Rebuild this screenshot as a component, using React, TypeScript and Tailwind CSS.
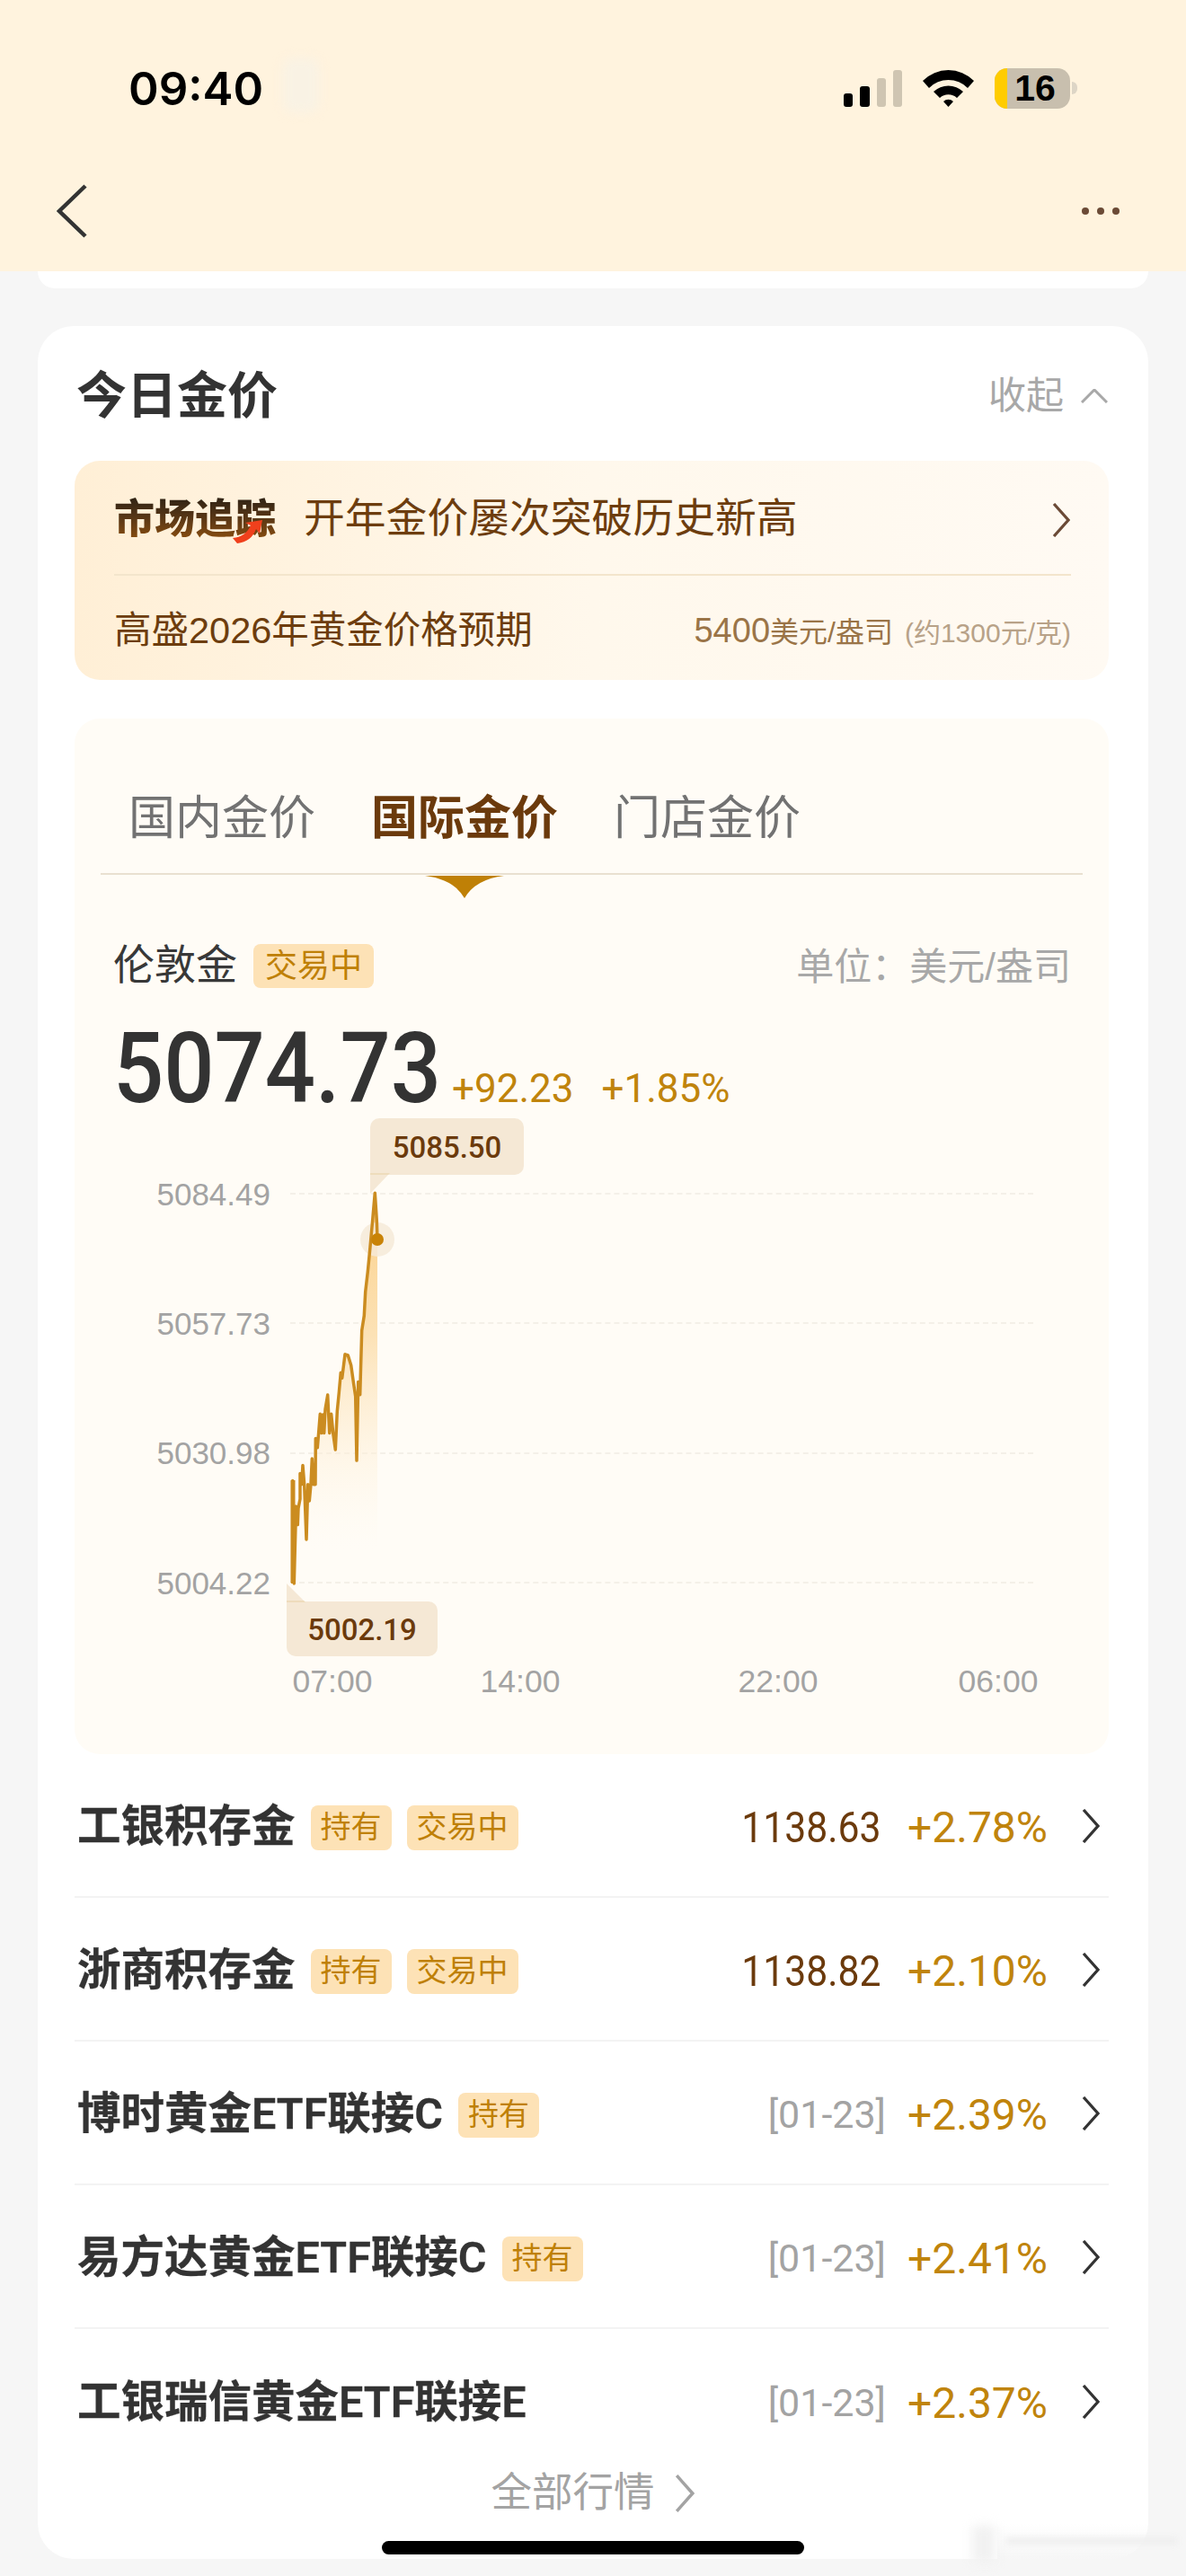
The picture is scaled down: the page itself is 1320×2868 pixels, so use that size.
const AXIS = ["5084.49", "5057.73", "5030.98", "5004.22"];

const FUNDS = [
  { name: "工银积存金", tags: ["持有", "交易中"], value: "1138.63", pct: "+2.78%" },
  { name: "浙商积存金", tags: ["持有", "交易中"], value: "1138.82", pct: "+2.10%" },
  { name: "博时黄金ETF联接C", tags: ["持有"], date: "[01-23]", pct: "+2.39%" },
  { name: "易方达黄金ETF联接C", tags: ["持有"], date: "[01-23]", pct: "+2.41%" },
  { name: "工银瑞信黄金ETF联接E", tags: [], date: "[01-23]", pct: "+2.37%" },
];

// traced from the chart, x then y, in page pixels once mapped below
const TRACE = [
  [587, 1330], [587, 1050], [592, 1330], [597, 1170], [598, 1120], [604, 1170], [606, 1125], [612, 1100],
  [612, 1030], [617, 1060], [621, 1008], [626, 1060], [633, 1210], [638, 1060], [643, 1105], [648, 1060],
  [652, 990], [657, 1060], [663, 1060], [664, 935], [670, 960], [679, 868], [683, 920], [688, 870],
  [692, 920], [696, 855], [704, 816], [710, 920], [716, 868], [722, 920], [730, 965], [736, 860],
  [742, 810], [748, 755], [752, 770], [762, 705], [772, 708], [782, 735], [790, 780], [797, 820],
  [801, 995], [806, 780], [812, 815], [818, 640], [826, 600], [830, 535], [838, 480], [845, 420],
  [853, 350], [862, 265], [868, 340], [870, 392],
];
const LINE = TRACE.map(([x, y]) => `${(130 + x / 3).toFixed(1)},${(1220 + y / 2.45).toFixed(1)}`).join(" ");

function Chevron({ className }: { className: string }) {
  return (
    <svg viewBox="0 0 20 38" fill="none" stroke="currentColor" strokeWidth="3.2" className={className}>
      <path d="M2 1 L18 19 L2 37" />
    </svg>
  );
}

function Tag({ label }: { label: string }) {
  return (
    <span className="flex h-[50px] items-center rounded-[8px] bg-[#fde2b6] px-[11px] text-[34px] text-[#bf8006]">
      {label}
    </span>
  );
}

function StatusBar() {
  return (
    <div className="flex h-[56px] items-center justify-between pl-[143px] pr-[121px]">
      <div className="relative font-['Inter',sans-serif] text-[51px] font-semibold leading-none text-black">
        09:40
        <span className="absolute left-[172px] top-[-8px] h-[60px] w-[40px] rounded-[10px] bg-[#f9f2e4] blur-[6px]" />
      </div>
      <div className="flex items-center gap-[23px]">
        <svg width="65" height="41" viewBox="0 0 65 41">
          <rect x="0" y="26" width="10" height="15" rx="3" fill="#000" />
          <rect x="18" y="18" width="11" height="23" rx="3" fill="#000" />
          <rect x="37" y="9" width="10" height="32" rx="3" fill="#cfc5b2" />
          <rect x="55" y="0" width="10" height="41" rx="3" fill="#cfc5b2" />
        </svg>
        <svg width="57" height="42" viewBox="0 0 57 42" fill="#000">
          <path d="M0 13 A40 40 0 0 1 57 13 L50 21 A30 30 0 0 0 7 21 Z" />
          <path d="M12 25 A24 24 0 0 1 45 25 L38 32 A14 14 0 0 0 19 32 Z" />
          <path d="M23 36 A8 8 0 0 1 34 36 L28.500 42 Z" />
        </svg>
        <div className="flex items-center gap-[2px]">
          <div className="relative flex h-[45px] w-[84px] items-center justify-center overflow-hidden rounded-[14px] bg-[#c8bfae]">
            <span className="absolute inset-y-0 left-0 w-[14px] bg-[#ffcc00]" />
            <span className="pl-[6px] text-[41px] font-bold leading-none text-black">16</span>
          </div>
          <span className="h-[14px] w-[6px] rounded-r-full bg-[#ddd5c6]" />
        </div>
      </div>
    </div>
  );
}

function Banner() {
  return (
    <div className="h-[244px] rounded-[28px] bg-linear-to-r from-[#ffefd6] via-[#fff8ec] to-[#fffaf3] pl-[44px] pr-[42px]">
      <div className="flex h-[128px] items-center border-b-2 border-[#f3e5cc] pt-[5px]">
        <div className="relative">
          <span className="bg-linear-to-b from-[#2e2214] to-[#8f500a] bg-clip-text text-[45px] font-black leading-none text-transparent">
            市场追踪
          </span>
          <svg width="36" height="28" viewBox="0 0 36 28" className="absolute left-[131px] top-[22px]">
            <path d="M1 21 Q15 20 21 7 L15 4 L34 1 L31 16 L27 11 Q22 25 6 27 Z" fill="#f0401c" />
          </svg>
        </div>
        <span className="ml-[31px] text-[45.800px] text-[#6d3d0e]">开年金价屡次突破历史新高</span>
        <Chevron className="ml-auto mr-[1px] h-[38px] w-[20px] text-[#6b4a36]" />
      </div>
      <div className="flex h-[114px] items-center justify-between pt-[9px]">
        <span className="text-[41.500px] text-[#6d3d0e]">高盛2026年黄金价格预期</span>
        <div className="flex items-baseline">
          <span className="text-[38px] text-[#9a7447]">5400</span>
          <span className="text-[32px] text-[#9a7447]">美元/盎司</span>
          <span className="ml-[13px] text-[30px] text-[#b8a288]">(约1300元/克)</span>
        </div>
      </div>
    </div>
  );
}

function PriceChart() {
  return (
    <div className="relative mt-[12px]">
      <div className="flex flex-col pr-[84px]">
        {AXIS.map((label) => (
          <div key={label} className="flex h-[144.330px] items-center">
            <span className="w-[218px] text-right text-[35px] leading-none text-[#a3a3a3]">{label}</span>
            <span className="ml-[22px] flex-1 border-t-2 border-dashed border-[#f4f0e8]" />
          </div>
        ))}
      </div>
      <div className="mt-[16px] flex pl-[237px] text-[35.500px] leading-[44px] text-[#a3a3a3]">
        <span className="w-[100px] text-center">07:00</span>
        <span className="ml-[109px] w-[100px] text-center">14:00</span>
        <span className="ml-[187px] w-[100px] text-center">22:00</span>
        <span className="ml-[145px] w-[100px] text-center">06:00</span>
      </div>

      <div className="absolute left-[329px] top-[-12px] flex h-[63px] w-[171px] items-center justify-center rounded-[10px] rounded-bl-none bg-[#f5e8d5] pt-[3px] font-['Roboto',sans-serif] text-[33px] font-medium text-[#6b3a0c]">
        5085.50
      </div>
      <div className="absolute left-[236px] top-[526px] flex h-[61px] w-[168px] items-center justify-center rounded-[10px] rounded-tl-none bg-[#f5e8d5] pt-[3px] font-['Roboto',sans-serif] text-[33px] font-medium text-[#6b3a0c]">
        5002.19
      </div>

      <svg className="absolute left-0 top-0 overflow-visible" width="1151" height="577" viewBox="83 1257 1151 577">
        <defs>
          <linearGradient id="area" gradientUnits="userSpaceOnUse" x1="0" y1="1330" x2="0" y2="1725">
            <stop offset="0" stopColor="#fbd08a" />
            <stop offset="0.4" stopColor="#fce2b6" />
            <stop offset="1" stopColor="#fff8ec" stopOpacity="0" />
          </linearGradient>
        </defs>
        <polygon points={`${LINE} 420,1730 326,1730`} fill="url(#area)" />
        <path d="M412 1308 H432 L412 1329 Z" fill="#f5e8d5" />
        <path d="M412 1306 H434 L432 1308 H412 Z" fill="#eedcbc" />
        <path d="M319 1783 H339 L319 1763 Z" fill="#f5e8d5" />
        <path d="M319 1782 H338 L340 1784 H319 Z" fill="#eedcbc" />
        <circle cx="420" cy="1380" r="19" fill="#f6ead8" fillOpacity="0.85" />
        <polyline points={LINE} fill="none" stroke="#cb8c20" strokeWidth="3.500" strokeLinejoin="round" />
        <path d="M326 1648 V1762" stroke="#cb8c20" strokeWidth="5" />
        <circle cx="420" cy="1380" r="7" fill="#c98307" />
      </svg>
    </div>
  );
}

function QuotePanel() {
  return (
    <div className="relative mt-[43px] h-[1153px] rounded-[28px] bg-[#fffcf6]">
      <div className="mx-[29px] flex h-[174px] items-end gap-[62px] border-b-2 border-[#e9e0d0] pb-[29px] pl-[31px] text-[52px] leading-[64px] text-[#727272]">
        <span>国内金价</span>
        <span className="font-bold text-[#6b3a0c]">国际金价</span>
        <span>门店金价</span>
      </div>
      <svg width="88" height="25" viewBox="0 0 88 25" className="absolute left-[390px] top-[175px]">
        <path d="M0 0 H88 Q56 4 44 25 Q32 4 0 0 Z" fill="#bf8006" />
      </svg>

      <div className="mt-[74px] flex h-[52px] items-center pl-[43px] pr-[42px]">
        <span className="text-[46px] leading-none text-[#383838]">伦敦金</span>
        <span className="ml-[18px] mt-[3px] flex h-[49px] items-center rounded-[8px] bg-[#fde2b6] px-[13px] text-[36px] text-[#bf8006]">
          交易中
        </span>
        <span className="ml-auto pt-[6px] text-[42px] leading-none text-[#a8a8a8]">单位：美元/盎司</span>
      </div>

      <div className="mt-[35px] flex h-[110px] items-baseline pl-[43px]">
        <span className="w-[377px]">
          <span className="inline-block origin-left scale-x-[0.9] font-['Roboto',sans-serif] text-[110px] font-medium leading-none text-[#333]">
            5074.73
          </span>
        </span>
        <span className="font-['Roboto',sans-serif] text-[44px] leading-none text-[#c0840c]">+92.23</span>
        <span className="ml-[31px] font-['Roboto',sans-serif] text-[44px] leading-none text-[#c0840c]">+1.85%</span>
      </div>

      <PriceChart />
    </div>
  );
}

function FundRow({ fund, last }: { fund: (typeof FUNDS)[number]; last: boolean }) {
  return (
    <div className={`flex h-[160px] items-center pl-[3px] pr-[10px] pt-[5px] ${last ? "" : "border-b-2 border-[#f3f3f3]"}`}>
      <span className="mr-[17px] font-['Roboto','Noto_Sans_CJK_SC',sans-serif] text-[48.500px] font-semibold leading-none text-[#333] [-webkit-text-stroke:0.3px_#333]">
        {fund.name}
      </span>
      <div className="flex gap-[17px]">
        {fund.tags.map((t) => (
          <Tag key={t} label={t} />
        ))}
      </div>
      {fund.value ? (
        <span className="ml-auto mr-[30px] inline-block origin-right scale-x-[0.89] font-['Roboto',sans-serif] text-[48px] text-[#6b3a0c]">
          {fund.value}
        </span>
      ) : (
        <span className="ml-auto mr-[24px] font-['Roboto',sans-serif] text-[43px] text-[#a3a3a3]">{fund.date}</span>
      )}
      <span className="font-['Roboto',sans-serif] text-[48px] text-[#c0840c]">{fund.pct}</span>
      <Chevron className="ml-[38px] h-[38px] w-[20px] -translate-y-[2px] text-[#333]" />
    </div>
  );
}

export default function App() {
  return (
    <div className="relative h-[2868px] w-[1320px] overflow-hidden bg-[#f6f6f6] font-['Liberation_Sans','Noto_Sans_CJK_SC',sans-serif]">
      <header className="h-[302px] bg-[#fff3de] pt-[70px]">
        <StatusBar />
        <div className="mt-[74px] flex h-[70px] items-center justify-between pl-[63px] pr-[74px]">
          <svg width="34" height="60" viewBox="0 0 34 60" fill="none" stroke="#333" strokeWidth="4.500">
            <path d="M32 2 L3 30 L32 58" />
          </svg>
          <div className="flex gap-[9px]">
            <span className="h-[8px] w-[8px] rounded-full bg-[#6b4a36]" />
            <span className="h-[8px] w-[8px] rounded-full bg-[#6b4a36]" />
            <span className="h-[8px] w-[8px] rounded-full bg-[#6b4a36]" />
          </div>
        </div>
      </header>

      <main className="px-[42px]">
        <div className="h-[19px] rounded-b-[28px] bg-white" />

        <section className="mt-[42px] rounded-[40px] bg-white px-[41px] pb-[50px] pr-[44px]">
          <div className="flex h-[150px] items-center justify-between pt-[6px]">
            <h2 className="pl-[2px] text-[56px] font-semibold leading-none text-[#333]">今日金价</h2>
            <div className="flex items-center gap-[19px] pr-[1px]">
              <span className="text-[42px] leading-none text-[#a8a8a8]">收起</span>
              <svg width="30" height="16" viewBox="0 0 30 16" fill="none" stroke="#a8a8a8" strokeWidth="3">
                <path d="M1 15 L15 1 L29 15" />
              </svg>
            </div>
          </div>

          <Banner />
          <QuotePanel />

          {FUNDS.map((fund, i) => (
            <FundRow key={fund.name} fund={fund} last={i === FUNDS.length - 1} />
          ))}

          <div className="flex h-[46px] items-center justify-center gap-[22px] pl-[2px]">
            <span className="text-[45.500px] leading-none text-[#a3a3a3]">全部行情</span>
            <Chevron className="h-[42px] w-[22px] text-[#a3a3a3]" />
          </div>
        </section>
      </main>

      {/* smudged-out watermark in the bottom right corner of the capture */}
      <div className="absolute left-[1110px] top-[2810px] h-[40px] w-[168px] bg-linear-to-b from-transparent to-[#f6f6f6]" />
      <div className="absolute left-[1082px] top-[2812px] h-[42px] w-[26px] bg-[#f1f1f1] blur-[6px]" />
      <div className="absolute left-[1120px] top-[2825px] h-[8px] w-[190px] bg-[#eeeeee] blur-[3px]" />

      <div className="absolute left-[425px] top-[2829px] h-[15px] w-[470px] rounded-full bg-black" />
    </div>
  );
}
